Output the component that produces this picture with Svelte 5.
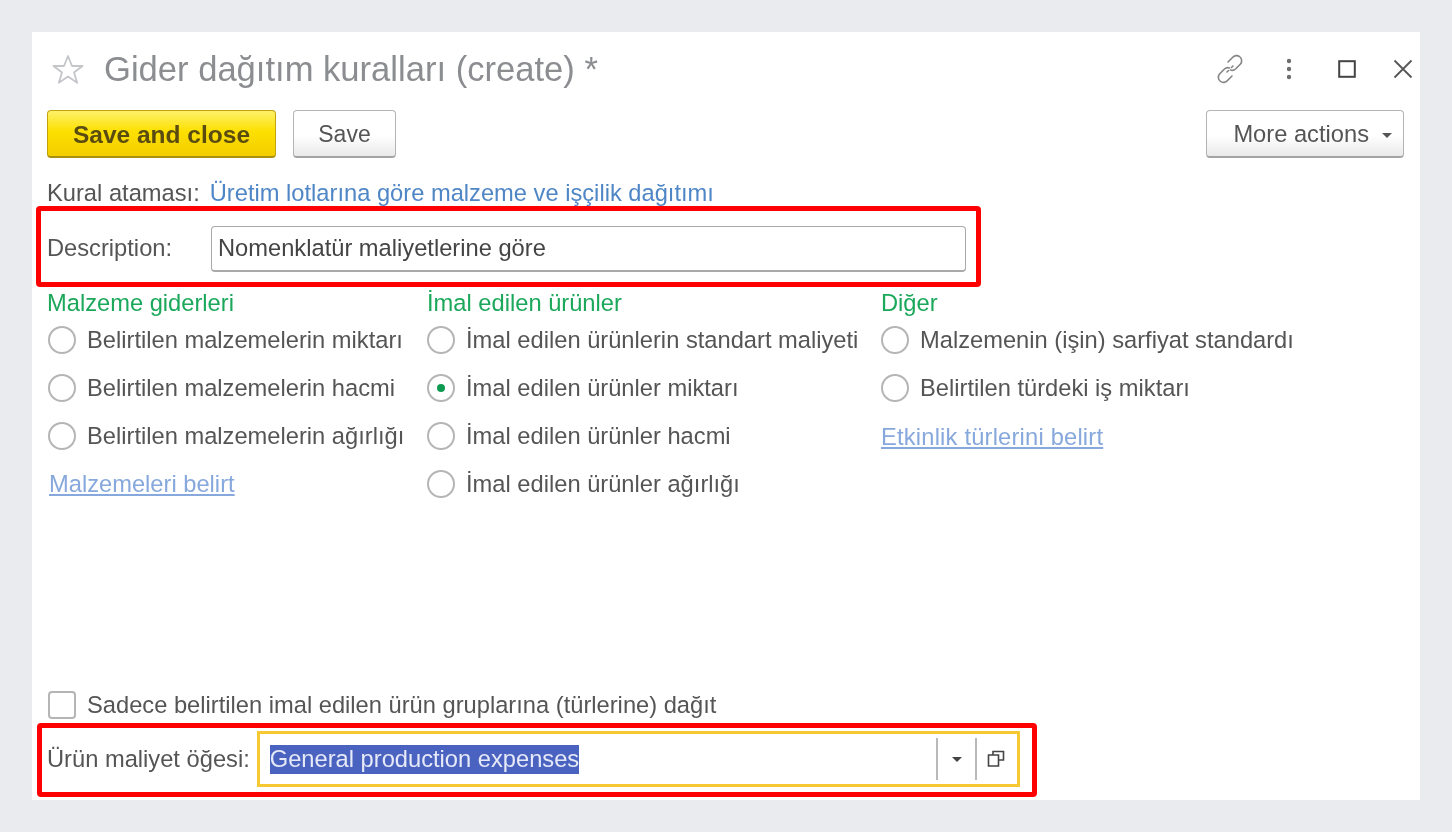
<script lang="ts">
	const columns = [
		{
			title: 'Malzeme giderleri',
			width: 380,
			options: ['Belirtilen malzemelerin miktarı', 'Belirtilen malzemelerin hacmi', 'Belirtilen malzemelerin ağırlığı'],
			link: 'Malzemeleri belirt'
		},
		{
			title: 'İmal edilen ürünler',
			width: 454,
			options: ['İmal edilen ürünlerin standart maliyeti', 'İmal edilen ürünler miktarı', 'İmal edilen ürünler hacmi', 'İmal edilen ürünler ağırlığı'],
			link: ''
		},
		{
			title: 'Diğer',
			width: 500,
			options: ['Malzemenin (işin) sarfiyat standardı', 'Belirtilen türdeki iş miktarı'],
			link: 'Etkinlik türlerini belirt'
		}
	];
	let selected = $state('İmal edilen ürünler miktarı');
	let onlyGroups = $state(false);
</script>

<main class="page">
	<section class="panel">
		<header class="titlebar">
			<svg class="star" width="34" height="32" viewBox="0 0 34 32">
				<path d="M17 3l4 10h10.500l-8.500 6.500 3.200 10.300L17 23.600 7.800 29.800 11 19.500 2.500 13H13z" fill="none" stroke="#c4c6ca" stroke-width="1.800" stroke-linejoin="round" />
			</svg>
			<h1>Gider dağıtım kuralları (create) *</h1>
			<div class="window-icons">
				<svg width="32" height="32" viewBox="0 0 32 32" fill="none" stroke="#858585" stroke-width="1.600" stroke-linecap="round">
					<path d="M14 9l4.500-4.500a5 5 0 0 1 8 6.500l-5 5a5 5 0 0 1-5 1" />
					<path d="M18 23l-4.500 4.500a5 5 0 0 1-8-6.500l5-5a5 5 0 0 1 5-1" />
					<path d="M13 19l1.500-1.500M17.500 14.500L19 13" />
				</svg>
				<svg class="dots" width="8" height="24" viewBox="0 0 8 24" fill="#6f6f6f">
					<circle cx="4" cy="4" r="2.200" />
					<circle cx="4" cy="12" r="2.200" />
					<circle cx="4" cy="20" r="2.200" />
				</svg>
				<svg class="maximize" width="18" height="18" viewBox="0 0 18 18">
					<rect x="1.200" y="1.200" width="15.600" height="15.600" fill="none" stroke="#444" stroke-width="2" />
				</svg>
				<svg class="close" width="20" height="20" viewBox="0 0 20 20">
					<path d="M1.500 1.500l17 17M18.500 1.500l-17 17" stroke="#555" stroke-width="1.800" />
				</svg>
			</div>
		</header>

		<div class="toolbar">
			<button class="btn primary">Save and close</button>
			<button class="btn save">Save</button>
			<button class="btn more">More actions<span class="caret"></span></button>
		</div>

		<div class="assign">
			<span class="label">Kural ataması:</span>
			<a href="#kural">Üretim lotlarına göre malzeme ve işçilik dağıtımı</a>
		</div>

		<div class="callout description">
			<label for="desc">Description:</label>
			<input id="desc" value="Nomenklatür maliyetlerine göre" />
		</div>

		<div class="columns">
			{#each columns as col}
				<div class="column" style="width: {col.width}px">
					<h2>{col.title}</h2>
					{#each col.options as opt}
						<label class="radio">
							<input type="radio" name="base" value={opt} bind:group={selected} />
							<span class="mark"></span>
							<span>{opt}</span>
						</label>
					{/each}
					{#if col.link}
						<a class="set-link" href="#belirt">{col.link}</a>
					{/if}
				</div>
			{/each}
		</div>

		<label class="check">
			<input type="checkbox" bind:checked={onlyGroups} />
			<span class="box"></span>
			<span>Sadece belirtilen imal edilen ürün gruplarına (türlerine) dağıt</span>
		</label>

		<div class="callout cost">
			<span class="label">Ürün maliyet öğesi:</span>
			<div class="combo">
				<span class="picked">General production expenses</span>
				<span class="combo-btn arrow"><span class="caret dark"></span></span>
				<span class="combo-btn open">
					<svg width="18" height="18" viewBox="0 0 18 18" fill="none" stroke="#444" stroke-width="1.600">
						<path d="M6 5V1.500h10.500V10H12" />
						<path d="M11.500 5H1.500v11h10z" />
					</svg>
				</span>
			</div>
		</div>
	</section>
</main>

<style>
	:global(body) {
		background: #e9ebef;
		font-family: 'Liberation Sans', Arial, sans-serif;
	}
	.page {
		padding: 32px;
		height: 832px;
		box-sizing: border-box;
	}
	.panel {
		background: #fff;
		height: 768px;
		box-sizing: border-box;
		padding: 0 15px;
		color: #555;
		font-size: 23.700px;
		display: flex;
		flex-direction: column;
		filter: blur(0.4px);
	}
	.titlebar {
		display: flex;
		align-items: center;
		height: 74px;
		padding: 0 0 0 4px;
	}
	.star {
		margin-right: 19px;
	}
	h1 {
		font-size: 34.600px;
		font-weight: 400;
		color: #8b8d90;
		margin: 0;
		flex: 1;
	}
	.window-icons {
		display: flex;
		align-items: center;
	}
	.dots {
		margin-left: 39px;
	}
	.maximize {
		margin-left: 45px;
	}
	.close {
		margin-left: 37px;
		margin-right: -8px;
	}
	.toolbar {
		display: flex;
		gap: 17px;
		margin-top: 4px;
		padding-right: 1px;
	}
	.btn {
		height: 48px;
		border-radius: 4px;
		font: inherit;
		padding: 2px 0 0;
		color: #555;
		border: 1px solid #b4b4b4;
		border-bottom: 2px solid #a4a4a4;
		background: linear-gradient(#fff 55%, #e9e9e9);
	}
	.primary {
		width: 229px;
		font-size: 24.500px;
		font-weight: 700;
		color: #5a4c10;
		border: 1px solid #c2a30c;
		border-bottom: 2px solid #a98f10;
		background: linear-gradient(#fdf06a, #fde000 45%, #f2cd00);
	}
	.save {
		width: 103px;
		font-size: 23px;
	}
	.more {
		width: 198px;
		margin-left: auto;
		text-align: right;
		padding-right: 11px;
	}
	.caret {
		display: inline-block;
		width: 0;
		height: 0;
		border: 5px solid transparent;
		border-top: 5px solid #555;
		border-bottom: 0;
		vertical-align: middle;
		margin-left: 13px;
	}
	.caret.dark {
		border-top-color: #444;
		margin: 0;
	}
	.assign {
		margin-top: 22px;
		height: 26px;
		line-height: 27px;
		display: flex;
		gap: 10px;
	}
	a {
		color: #4f86c6;
		text-decoration: none;
	}
	.callout {
		border: 5px solid #f00;
		border-radius: 4px;
		display: flex;
		align-items: center;
		box-sizing: border-box;
	}
	.description {
		width: 945px;
		height: 81px;
		margin-left: -11px;
		padding: 4px 10px 0 6px;
	}
	.description label {
		width: 164px;
		flex: none;
	}
	.description input {
		flex: 1;
		min-width: 0;
		height: 46px;
		box-sizing: border-box;
		border: 1px solid #a9a9a9;
		border-bottom-width: 2px;
		border-radius: 4px;
		padding: 0 6px;
		font: inherit;
		color: #444;
		outline: none;
	}
	.columns {
		display: flex;
		height: 400px;
		margin-top: 3px;
	}
	.column {
		flex: none;
		display: flex;
		flex-direction: column;
		align-items: flex-start;
	}
	.column:first-child .radio {
		padding-left: 1px;
	}
	h2 {
		font-size: 23.700px;
		font-weight: 400;
		color: #1ba85b;
		margin: 0;
		height: 26px;
		line-height: 26px;
	}
	.radio {
		display: flex;
		align-items: center;
		height: 48px;
		white-space: nowrap;
	}
	.radio input,
	.check input {
		position: absolute;
		opacity: 0;
		pointer-events: none;
	}
	.mark {
		width: 28px;
		height: 28px;
		box-sizing: border-box;
		border: 2px solid #b5b5b5;
		border-radius: 50%;
		margin-right: 11px;
		flex: none;
		display: flex;
		align-items: center;
		justify-content: center;
	}
	.radio input:checked + .mark::after {
		content: '';
		width: 8px;
		height: 8px;
		border-radius: 50%;
		background: #0e9a50;
	}
	.set-link {
		color: #86a8dc;
		text-decoration: underline;
		height: 48px;
		line-height: 48px;
		margin-left: 2px;
	}
	.column:last-child .set-link {
		margin-left: 0;
		margin-top: 1px;
		letter-spacing: 0.2px;
	}
	.check {
		display: flex;
		align-items: center;
		height: 30px;
	}
	.box {
		width: 28px;
		height: 28px;
		box-sizing: border-box;
		border: 2px solid #b5b5b5;
		border-radius: 4px;
		margin: 0 11px 0 1px;
		flex: none;
	}
	.cost {
		width: 1000px;
		height: 74px;
		margin-left: -10px;
		margin-top: 3px;
		padding: 0 12px 2px 5px;
	}
	.cost .label {
		margin-right: 7px;
		white-space: nowrap;
	}
	.combo {
		flex: 1;
		height: 56px;
		box-sizing: border-box;
		border: 3px solid #f6c832;
		display: flex;
		align-items: center;
		padding-left: 10px;
	}
	.picked {
		background: #4a63c0;
		color: #e6e9f8;
		height: 29px;
		line-height: 29px;
		margin-right: auto;
		white-space: nowrap;
	}
	.combo-btn {
		height: 42px;
		border-left: 2px solid #b9b9b9;
		display: flex;
		align-items: center;
		justify-content: center;
		flex: none;
		box-sizing: border-box;
	}
	.arrow {
		width: 39px;
	}
	.open {
		width: 42px;
		padding-right: 3px;
	}
</style>
